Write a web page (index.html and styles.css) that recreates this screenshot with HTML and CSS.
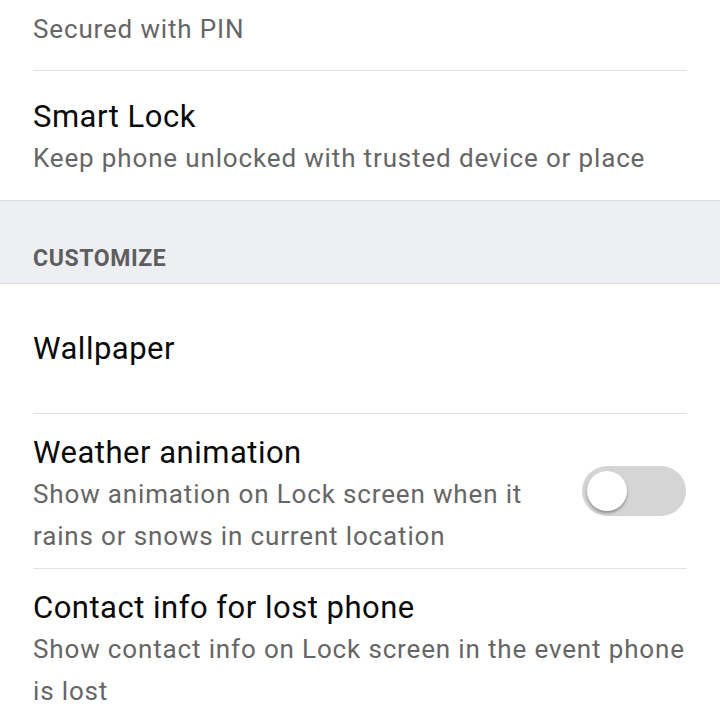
FILE: index.html
```html
<!DOCTYPE html>
<html>
<head>
<meta charset="utf-8">
<link rel="stylesheet" href="styles.css">
</head>
<body>
<div class="screen">
  <div class="item item-partial">
    <div class="sub">Secured with PIN</div>
  </div>
  <div class="item item-last item-smart">
    <div class="title">Smart Lock</div>
    <div class="sub">Keep phone unlocked with trusted device or place</div>
  </div>
  <div class="section">
    <div class="section-label">CUSTOMIZE</div>
  </div>
  <div class="item item-single">
    <div class="title">Wallpaper</div>
  </div>
  <div class="item item-toggle">
    <div class="text">
      <div class="title">Weather animation</div>
      <div class="sub">Show animation on Lock screen when it rains or snows in current location</div>
    </div>
    <div class="switch"><div class="knob"></div></div>
  </div>
  <div class="item item-last item-contact">
    <div class="title">Contact info for lost phone</div>
    <div class="sub">Show contact info on Lock screen in the event phone is lost</div>
  </div>
</div>
</body>
</html>
```

FILE: styles.css
```css
html, body {
  margin: 0;
  padding: 0;
  background: #ffffff;
}
.screen {
  width: 720px;
  height: 720px;
  overflow: hidden;
  font-family: Roboto, "Noto Sans", sans-serif;
}
.item {
  margin: 0 33px;
  border-bottom: 1px solid #e2e2e2;
}
.item-last {
  border-bottom: none;
}
.item-partial {
  padding: 8px 0 0;
  box-sizing: border-box;
  height: 71px;
}
.item-smart {
  padding: 25px 0 0;
  height: 129px;
  box-sizing: border-box;
}
.title {
  font-size: 31px;
  line-height: 41px;
  letter-spacing: 0.5px;
  color: #0a0a0a;
}
.sub {
  font-size: 26px;
  line-height: 42px;
  letter-spacing: 0.85px;
  color: #666666;
}
.section {
  background: #eeeff3;
  border-top: 1px solid #dcdcde;
  border-bottom: 1px solid #dcdcde;
  height: 82px;
  padding: 0 33px;
  display: flex;
  align-items: flex-end;
}
.section-label {
  font-size: 23px;
  line-height: 30px;
  font-weight: 700;
  letter-spacing: 0.6px;
  color: #5e5e5e;
  padding-bottom: 9px;
}
.item-single {
  height: 129px;
  display: flex;
  align-items: center;
}
.item-toggle {
  display: flex;
  align-items: flex-start;
  padding: 18px 0 0;
  height: 155px;
  box-sizing: border-box;
  gap: 40px;
}
.text {
  flex: 1;
}
.switch {
  width: 104px;
  height: 50px;
  border-radius: 25px;
  background: #d5d5d5;
  margin-right: 1px;
  margin-top: 34px;
  display: flex;
  align-items: center;
  padding: 0 5px;
  box-sizing: border-box;
  flex: none;
}
.knob {
  width: 40px;
  height: 40px;
  border-radius: 50%;
  background: #ffffff;
  box-shadow: 0 2px 3px rgba(0, 0, 0, 0.35);
}
.item-contact {
  padding: 18px 0 0;
}
```
